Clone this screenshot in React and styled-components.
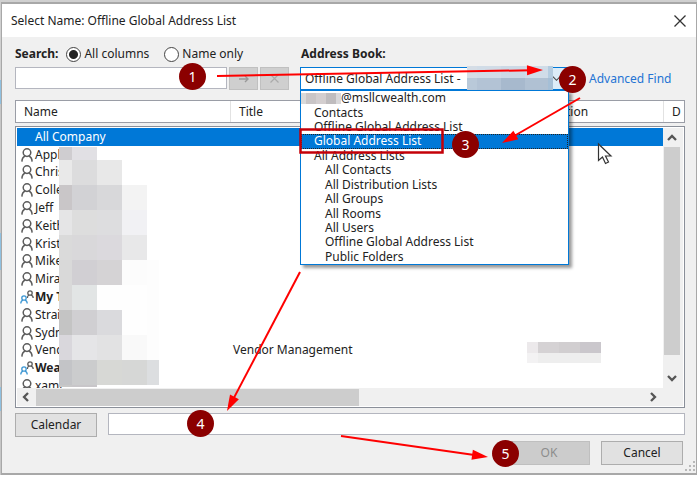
import React from 'react';
import styled, { createGlobalStyle } from 'styled-components';

const people = [
  { name: 'All Company', selected: true },
  { name: 'Appl', icon: 'person' },
  { name: 'Chris', icon: 'person' },
  { name: 'Colle', icon: 'person' },
  { name: 'Jeff', icon: 'person' },
  { name: 'Keith', icon: 'person' },
  { name: 'Krist', icon: 'person' },
  { name: 'Mike', icon: 'person' },
  { name: 'Mira', icon: 'person' },
  { name: 'My T', icon: 'group' },
  { name: 'Strai', icon: 'person' },
  { name: 'Sydn', icon: 'person' },
  { name: 'Vend', icon: 'person', title: 'Vendor Management', location: true },
  { name: 'Wea', icon: 'group' },
  { name: 'xami', icon: 'person' },
];

const books = [
  { name: '@msllcwealth.com', level: 0 },
  { name: 'Contacts', level: 1 },
  { name: 'Offline Global Address List', level: 1 },
  { name: 'Global Address List', level: 1, active: true },
  { name: 'All Address Lists', level: 1 },
  { name: 'All Contacts', level: 2 },
  { name: 'All Distribution Lists', level: 2 },
  { name: 'All Groups', level: 2 },
  { name: 'All Rooms', level: 2 },
  { name: 'All Users', level: 2 },
  { name: 'Offline Global Address List', level: 2 },
  { name: 'Public Folders', level: 2 },
];

const nameMosaic = [
  ['#cfcdd0', '#e1e0e4', 'transparent', 'transparent', 'transparent'],
  ['#e9e9e9', '#dcdcdd', '#e8e8e8', '#fff', '#fff'],
  ['#c9c6c8', '#d2d2d5', '#d8d8da', '#f3f3f3', '#fff'],
  ['#e5e5e6', '#dddddd', '#dddddf', '#f1f1f4', '#fff'],
  ['#dadada', '#d9d8da', '#dbd9dd', '#e8e8e9', '#fff'],
  ['#d9d9d9', '#d1cfd3', '#d5d3d5', '#fcfcfc', '#fdfdfd'],
  ['#d9d9d9', '#e2e5e5', '#fefefe', '#fefefe', '#fdfdfd'],
  ['#c4c4c4', '#d0cfd2', '#dadadd', '#fefefe', '#fdfdfd'],
  ['#d9d7dc', '#e5e5e7', '#e2e2e3', '#f9f9f9', '#fdfdfd'],
  ['#c3c4c7', '#cbcccd', '#d7d8d5', '#d6d7d6', '#dcdee0'],
  ['#c8c8c8', '#c8c6c9', 'transparent', 'transparent', 'transparent'],
];

function Mosaic({ rows }) {
  return rows.flat().map((color, i) => <Cell key={i} $color={color} />);
}

function PersonIcon() {
  return (
    <svg width="12" height="14" viewBox="0 0 12 14" fill="none" stroke="#5c5c5c" strokeWidth="1.5">
      <circle cx="6" cy="4.6" r="3.8" />
      <path d="M0.9 13.6C1 10.8 2.4 8.8 4.2 8M11.1 13.6C11 10.8 9.6 8.8 7.8 8" />
    </svg>
  );
}

function GroupIcon() {
  return (
    <svg width="14" height="14" viewBox="0 0 14 14" fill="none" strokeWidth="1.3">
      <g stroke="#5c5c5c">
        <circle cx="10" cy="3" r="2.2" />
        <path d="M7.4 8C7.4 6.2 8.2 5.3 9.2 5M13.2 8C13.2 6.2 11.8 5.3 10.8 5" />
      </g>
      <g stroke="#3d97d3">
        <circle cx="4" cy="8" r="2.2" />
        <path d="M0.8 13.6C0.8 11.6 2 10.4 3 10.1M7.2 13.6C7.2 11.6 6 10.4 5 10.1" />
      </g>
    </svg>
  );
}

function Chevron({ d }) {
  return (
    <svg width="10" height="10" viewBox="0 0 10 10" fill="none" stroke="#555" strokeWidth="2.3">
      <path d={d} />
    </svg>
  );
}

function Arrow({ from, to }) {
  const angle = Math.atan2(to[1] - from[1], to[0] - from[0]);
  const point = (back, side) =>
    [
      to[0] - back * Math.cos(angle) - side * Math.sin(angle),
      to[1] - back * Math.sin(angle) + side * Math.cos(angle),
    ].join(' ');
  return (
    <g>
      <path d={`M${from.join(' ')}L${point(12, 0)}`} stroke="#fe0000" strokeWidth="2" />
      <path d={`M${point(0, 0)}L${point(16, 5)}L${point(16, -5)}Z`} fill="#fe0000" />
    </g>
  );
}

function AddressBook() {
  return (
    <BookField>
      <BookSelect id="book" defaultValue="offline">
        <option value="offline">Offline Global Address List -</option>
      </BookSelect>
      <BookArrow>
        <svg width="9" height="9" viewBox="0 0 10 10" fill="none" stroke="#444" strokeWidth="1.2">
          <path d="M1 3L5 7L9 3" />
        </svg>
      </BookArrow>
      <BookMosaic>
        <Mosaic
          rows={[
            ['#d5dde6', '#d1dce7', '#ccd9e6', '#d0dce8', '#b4cce0'],
            ['#b9c9d9', '#b3c3d5', '#a7b9cd', '#b0c1d3', '#a5bfd6'],
          ]}
        />
      </BookMosaic>
      <Menu role="listbox" aria-label="Address Book">
        {books.map((book, i) => (
          <MenuItem
            key={i}
            role="option"
            aria-selected={!!book.active}
            $level={book.level}
            $active={book.active}
          >
            {book.level === 0 && (
              <AccountMosaic>
                <Mosaic rows={[['#d9d9d9', '#c9c5c6', '#d3cecf', '#bfbcbe', '#d9d8da']]} />
              </AccountMosaic>
            )}
            {book.name}
          </MenuItem>
        ))}
      </Menu>
    </BookField>
  );
}

function PeopleList() {
  return (
    <ListBox>
      <Viewport>
        <Table>
          <colgroup>
            <col width="214" />
            <col width="294" />
            <col />
          </colgroup>
          <tbody>
            {people.map(person => (
              <Row key={person.name} $selected={person.selected}>
                <NameCell $bold={person.icon === 'group'}>
                  <NameInner>
                    <IconSlot>
                      {person.icon === 'person' && <PersonIcon />}
                      {person.icon === 'group' && <GroupIcon />}
                    </IconSlot>
                    {person.name}
                  </NameInner>
                </NameCell>
                <td>{person.title}</td>
                <td>
                  {person.location && (
                    <LocationAnchor>
                      <LocationMosaic>
                        <Mosaic
                          rows={[
                            ['#ece9eb', '#d5d2d4', '#d1ced0', '#cac7cc'],
                            ['#f3f2f3', '#eeeeee', '#eeeeee', '#eeeeee'],
                          ]}
                        />
                      </LocationMosaic>
                    </LocationAnchor>
                  )}
                </td>
              </Row>
            ))}
          </tbody>
        </Table>
        <NameMosaic>
          <Mosaic rows={nameMosaic} />
        </NameMosaic>
      </Viewport>
      <VerticalBar>
        <Chevron d="M1 7L5 3L9 7" />
        <VerticalThumb />
        <Chevron d="M1 3L5 7L9 3" />
      </VerticalBar>
      <HorizontalBar>
        <Chevron d="M7 1L3 5L7 9" />
        <HorizontalThumb />
        <Chevron d="M3 1L7 5L3 9" />
      </HorizontalBar>
    </ListBox>
  );
}

function Annotations() {
  return (
    <Overlay aria-hidden="true">
      <Drawing>
        <rect x="300.5" y="129.5" width="142" height="23" fill="none" stroke="#c40008" strokeWidth="2.5" />
        <Arrow from={[217, 76]} to={[543, 70]} />
        <Arrow from={[580, 98]} to={[502, 143]} />
        <Arrow from={[300, 272]} to={[227, 411]} />
        <Arrow from={[341, 436]} to={[488, 457]} />
        <path
          d="M598.5 144V160.5L602.5 157L605.5 163.5L608.5 162L605.5 156H611Z"
          fill="#fff"
          stroke="#333"
          strokeWidth="1.2"
        />
      </Drawing>
      <Badge $x={192} $y={76}>1</Badge>
      <Badge $x={572} $y={79}>2</Badge>
      <Badge $x={465} $y={144}>3</Badge>
      <Badge $x={200} $y={423}>4</Badge>
      <Badge $x={505} $y={453}>5</Badge>
    </Overlay>
  );
}

export default function App() {
  return (
    <Desktop>
      <GlobalStyle />
      <Dialog>
        <TitleBar>
          <Title>Select Name: Offline Global Address List</Title>
          <CloseButton aria-label="Close">
            <svg width="12" height="12" viewBox="0 0 12 12" stroke="#333" strokeWidth="1.3">
              <path d="M0.5 0.5L11.5 11.5M11.5 0.5L0.5 11.5" />
            </svg>
          </CloseButton>
        </TitleBar>
        <Body>
          <Filters>
            <Options>
              <Strong htmlFor="search">Search:</Strong>
              <Choice>
                <Radio name="scope" defaultChecked />
                All columns
              </Choice>
              <Choice>
                <Radio name="scope" />
                Name only
              </Choice>
            </Options>
            <Strong htmlFor="book">Address Book:</Strong>
            <span />
            <SearchBox>
              <TextInput id="search" />
              <SmallButton disabled aria-label="Go">
                <svg width="10" height="8" viewBox="0 0 10 8" fill="none" stroke="#999" strokeWidth="1.4">
                  <path d="M0 4H9M6 1L9 4L6 7" />
                </svg>
              </SmallButton>
              <SmallButton disabled aria-label="Clear">
                <svg width="9" height="9" viewBox="0 0 9 9" stroke="#aaa" strokeWidth="1.2">
                  <path d="M0.5 0.5L8.5 8.5M8.5 0.5L0.5 8.5" />
                </svg>
              </SmallButton>
            </SearchBox>
            <AddressBook />
            <AdvancedLink href="#advanced">Advanced Find</AdvancedLink>
          </Filters>
          <HeaderTable>
            <colgroup>
              <col width="215" />
              <col width="301" />
              <col />
              <col width="20" />
            </colgroup>
            <thead>
              <tr>
                <th>Name</th>
                <th>Title</th>
                <th>Location</th>
                <th>D</th>
              </tr>
            </thead>
          </HeaderTable>
          <PeopleList />
          <CalendarRow>
            <Button id="calendar-button">Calendar</Button>
            <TextInput aria-labelledby="calendar-button" />
          </CalendarRow>
          <Actions>
            <Button disabled>OK</Button>
            <Button>Cancel</Button>
          </Actions>
        </Body>
        <Grip width="10" height="10" viewBox="0 0 10 10" fill="#b8b8b8">
          <path d="M8 0h2v2h-2zM4 4h2v2h-2zM8 4h2v2h-2zM0 8h2v2h-2zM4 8h2v2h-2zM8 8h2v2h-2z" />
        </Grip>
      </Dialog>
      <Annotations />
    </Desktop>
  );
}

const GlobalStyle = createGlobalStyle`
  * {
    box-sizing: border-box;
  }

  body {
    margin: 0;
    background: #fff;
    color: #222;
    font: 12px/16px 'Noto Sans', 'Open Sans', sans-serif;
  }

  button,
  input,
  select {
    margin: 0;
    color: inherit;
    font: inherit;
  }
`;

const Desktop = styled.div`
  position: relative;
  margin-right: 2px;
  padding: 2px 0 0 1px;
  background: linear-gradient(
    #d0d0d0 80px,
    #8fc0e0 80px 104px,
    #c6c6c6 104px 233px,
    #8fc0e0 233px 270px,
    #c6c6c6 270px 387px,
    #8fc0e0 387px 411px,
    #c6c6c6 411px
  );
`;

const Dialog = styled.main`
  position: relative;
  border: 1px solid #a8a8a8;
  border-width: 2px 1px;
  background: #f0f0f0;
`;

const TitleBar = styled.header`
  display: flex;
  align-items: center;
  justify-content: space-between;
  height: 33px;
  padding: 0 10px 0 9px;
  background: #fff;
`;

const Title = styled.h1`
  margin: 0;
  font-size: 12px;
  font-weight: 400;
`;

const CloseButton = styled.button`
  display: flex;
  padding: 0;
  border: 0;
  background: none;
`;

const Body = styled.div`
  padding: 9px 11px 8px 13px;
`;

const Filters = styled.div`
  display: grid;
  grid-template-columns: 274px 268px 1fr;
  column-gap: 12px;
  row-gap: 5px;
  align-items: center;
`;

const Options = styled.div`
  display: flex;
  align-items: center;
`;

const Strong = styled.label`
  font-weight: 700;
`;

const Choice = styled.label`
  display: flex;
  align-items: center;
  gap: 3px;
  margin-left: 8px;

  & + & {
    margin-left: 15px;
  }
`;

const Radio = styled.input.attrs({ type: 'radio' })`
  width: 15px;
  height: 15px;
  border: 1px solid #444;
  border-radius: 50%;
  appearance: none;
  background: #fff;

  &:checked {
    background: radial-gradient(#222 4px, #fff 5px);
  }
`;

const SearchBox = styled.div`
  display: flex;
  gap: 2px;
`;

const TextInput = styled.input.attrs({ type: 'text' })`
  flex: 1;
  min-width: 0;
  height: 22px;
  padding: 0 4px;
  border: 1px solid #b4b6bf;
  background: #fff;
`;

const SmallButton = styled.button`
  display: flex;
  align-items: center;
  justify-content: center;
  width: 29px;
  height: 23px;
  padding: 0;
  border: 1px solid #c0c0c0;
  background: #cfcfcf;
`;

const BookField = styled.div`
  position: relative;
  margin-left: -1px;
`;

const BookSelect = styled.select`
  display: block;
  width: 100%;
  height: 23px;
  padding: 0 4px;
  border: 1px solid #0078d7;
  border-radius: 0;
  appearance: none;
  background: #fff;
`;

const BookArrow = styled.span`
  position: absolute;
  top: 1px;
  right: 1px;
  display: flex;
  align-items: center;
  width: 16px;
  height: 21px;
  background: #dcecf8;
  pointer-events: none;
`;

const Cell = styled.span`
  background: ${props => props.$color};
`;

const BookMosaic = styled.span`
  position: absolute;
  top: -1px;
  right: 16px;
  display: grid;
  grid-template: 12px 12px / 10px 24px 24px 23px 5px;
`;

const Menu = styled.ul`
  position: absolute;
  z-index: 1;
  top: 23px;
  right: 0;
  left: 0;
  display: flex;
  flex-direction: column;
  height: 175px;
  margin: 0;
  padding: 0;
  border: 1px solid #0078d7;
  background: #fff;
  box-shadow: 3px 3px 3px rgba(0, 0, 0, 0.4);
  list-style: none;
`;

const MenuItem = styled.li`
  display: flex;
  flex: 1;
  align-items: center;
  min-height: 0;
  padding-left: ${props => [0, 13, 24][props.$level]}px;
  background: ${props => (props.$active ? '#0078d7' : 'none')};
  color: ${props => (props.$active ? '#fff' : 'inherit')};
  outline: ${props => (props.$active ? '1px dotted #222' : 'none')};
  outline-offset: -1px;
  line-height: 14px;
`;

const AccountMosaic = styled.span`
  display: grid;
  grid-template: 11px / 5px 10px 10px 10px 5px;
`;

const AdvancedLink = styled.a`
  margin-left: 8px;
  color: #2474d4;
  text-decoration: none;
`;

const HeaderTable = styled.table`
  width: 100%;
  height: 23px;
  margin-top: 10px;
  border: 1px solid #9a9da6;
  border-spacing: 0;
  background: #fff;
  table-layout: fixed;

  th {
    padding: 0 0 0 8px;
    border-right: 1px solid #e2e2e2;
    font-weight: 400;
    text-align: left;
  }

  th:last-child {
    border-right: 0;
  }
`;

const ListBox = styled.div`
  display: grid;
  grid-template: 260px 18px / 1fr 20px;
  margin-top: 3px;
  padding: 1px;
  border: 1px solid #8a8f99;
  background: #fff;
`;

const Viewport = styled.div`
  position: relative;
  overflow: hidden;
`;

const Table = styled.table`
  width: 100%;
  height: 267px;
  border-spacing: 0;
  table-layout: fixed;

  td {
    padding: 0 0 0 2px;
    line-height: 16px;
  }
`;

const Row = styled.tr`
  background: ${props => (props.$selected ? '#0078d7' : 'none')};
  color: ${props => (props.$selected ? '#fff' : 'inherit')};
`;

const NameCell = styled.td`
  font-weight: ${props => (props.$bold ? 700 : 400)};
`;

const NameInner = styled.div`
  display: flex;
  align-items: center;
  height: 16px;
`;

const IconSlot = styled.span`
  display: flex;
  justify-content: center;
  width: 16px;
`;

const NameMosaic = styled.div`
  position: absolute;
  top: 19px;
  left: 42px;
  display: grid;
  grid-template-rows: 13px repeat(9, 25px) 2px;
  grid-template-columns: 13px 25px 25px 25px 12px;
`;

const LocationAnchor = styled.div`
  position: relative;
  height: 16px;
`;

const LocationMosaic = styled.div`
  position: absolute;
  top: 0;
  left: 0;
  display: grid;
  grid-template: 11px 10px / 11px 21px 21px 21px;
`;

const VerticalBar = styled.div`
  display: flex;
  flex-direction: column;
  align-items: center;
  gap: 4px;
  padding: 5px 3px 5px 1px;
  background: #f0f0f0;
`;

const VerticalThumb = styled.div`
  width: 16px;
  height: 208px;
  margin-bottom: auto;
  background: #cdcdcd;
`;

const HorizontalBar = styled.div`
  display: flex;
  grid-column: 1 / -1;
  align-items: center;
  gap: 5px;
  padding: 0 25px 0 4px;
  background: #f0f0f0;
`;

const HorizontalThumb = styled.div`
  width: 323px;
  height: 17px;
  margin-right: auto;
  background: #cdcdcd;
`;

const CalendarRow = styled.div`
  display: flex;
  gap: 11px;
  margin-top: 5px;
`;

const Button = styled.button`
  width: 82px;
  height: 24px;
  padding: 0;
  border: 1px solid #adadad;
  background: #e1e1e1;

  &:disabled {
    border-color: #bfbfbf;
    background: #cccccc;
    color: #8d8d8d;
  }
`;

const Actions = styled.div`
  display: flex;
  justify-content: flex-end;
  gap: 11px;
  margin-top: 4px;
  padding-right: 2px;
`;

const Grip = styled.svg`
  position: absolute;
  right: 1px;
  bottom: 2px;
`;

const Overlay = styled.div`
  position: absolute;
  z-index: 2;
  inset: 0;
  pointer-events: none;
`;

const Drawing = styled.svg`
  display: block;
  width: 100%;
  height: 100%;
`;

const Badge = styled.span`
  position: absolute;
  top: ${props => props.$y - 13}px;
  left: ${props => props.$x - 13}px;
  width: 27px;
  height: 27px;
  border-radius: 50%;
  background: #8b0000;
  color: #fff;
  font-size: 14px;
  line-height: 27px;
  text-align: center;
`;
